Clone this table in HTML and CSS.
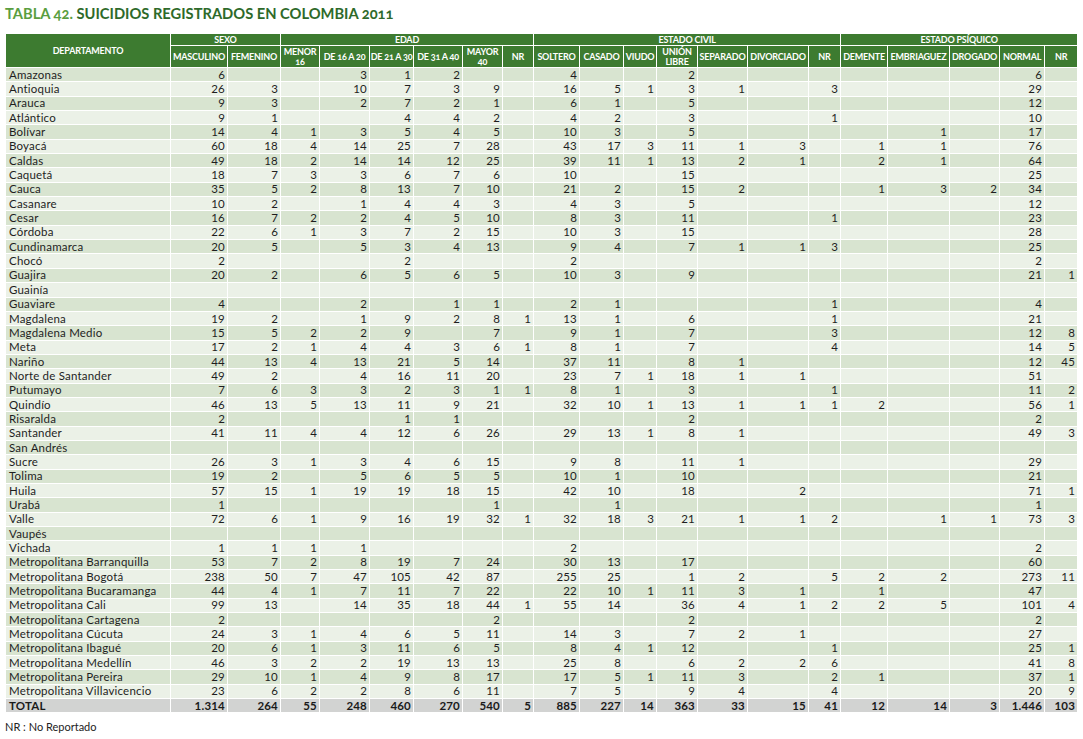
FILE: index.html
```html
<!DOCTYPE html>
<html lang="es">
<head>
<meta charset="utf-8">
<title>Tabla 42. Suicidios registrados en Colombia 2011</title>
<link rel="stylesheet" href="styles.css">
</head>
<body>
<div class="page">
<h1 class="title"><span class="num">TABLA 42.</span> SUICIDIOS REGISTRADOS EN COLOMBIA 2011</h1>
<table class="grid">
<colgroup>
<col class="c-dep"><col class="c57"><col class="c53"><col class="c39"><col class="c50"><col class="c44"><col class="c49"><col class="c40"><col class="c31">
<col class="c46"><col class="c44"><col class="c33"><col class="c41"><col class="c50"><col class="c61"><col class="c32">
<col class="c47"><col class="c62"><col class="c50"><col class="c45"><col class="c33">
</colgroup>
<thead>
<tr class="groups">
<th rowspan="2" class="h-dep">DEPARTAMENTO</th>
<th colspan="2">SEXO</th>
<th colspan="6">EDAD</th>
<th colspan="7">ESTADO CIVIL</th>
<th colspan="5">ESTADO PSÍQUICO</th>
</tr>
<tr class="cols">
<th>MASCULINO</th><th>FEMENINO</th>
<th>MENOR<br>16</th><th>DE 16 A 20</th><th>DE 21 A 30</th><th>DE 31 A 40</th><th>MAYOR<br>40</th><th>NR</th>
<th>SOLTERO</th><th>CASADO</th><th>VIUDO</th><th>UNIÓN<br>LIBRE</th><th>SEPARADO</th><th>DIVORCIADO</th><th>NR</th>
<th>DEMENTE</th><th>EMBRIAGUEZ</th><th>DROGADO</th><th>NORMAL</th><th>NR</th>
</tr>
</thead>
<tbody>
<tr><td class="dep">Amazonas</td><td>6</td><td></td><td></td><td>3</td><td>1</td><td>2</td><td></td><td></td><td>4</td><td></td><td></td><td>2</td><td></td><td></td><td></td><td></td><td></td><td></td><td>6</td><td></td></tr>
<tr><td class="dep">Antioquia</td><td>26</td><td>3</td><td></td><td>10</td><td>7</td><td>3</td><td>9</td><td></td><td>16</td><td>5</td><td>1</td><td>3</td><td>1</td><td></td><td>3</td><td></td><td></td><td></td><td>29</td><td></td></tr>
<tr><td class="dep">Arauca</td><td>9</td><td>3</td><td></td><td>2</td><td>7</td><td>2</td><td>1</td><td></td><td>6</td><td>1</td><td></td><td>5</td><td></td><td></td><td></td><td></td><td></td><td></td><td>12</td><td></td></tr>
<tr><td class="dep">Atlántico</td><td>9</td><td>1</td><td></td><td></td><td>4</td><td>4</td><td>2</td><td></td><td>4</td><td>2</td><td></td><td>3</td><td></td><td></td><td>1</td><td></td><td></td><td></td><td>10</td><td></td></tr>
<tr><td class="dep">Bolívar</td><td>14</td><td>4</td><td>1</td><td>3</td><td>5</td><td>4</td><td>5</td><td></td><td>10</td><td>3</td><td></td><td>5</td><td></td><td></td><td></td><td></td><td>1</td><td></td><td>17</td><td></td></tr>
<tr><td class="dep">Boyacá</td><td>60</td><td>18</td><td>4</td><td>14</td><td>25</td><td>7</td><td>28</td><td></td><td>43</td><td>17</td><td>3</td><td>11</td><td>1</td><td>3</td><td></td><td>1</td><td>1</td><td></td><td>76</td><td></td></tr>
<tr><td class="dep">Caldas</td><td>49</td><td>18</td><td>2</td><td>14</td><td>14</td><td>12</td><td>25</td><td></td><td>39</td><td>11</td><td>1</td><td>13</td><td>2</td><td>1</td><td></td><td>2</td><td>1</td><td></td><td>64</td><td></td></tr>
<tr><td class="dep">Caquetá</td><td>18</td><td>7</td><td>3</td><td>3</td><td>6</td><td>7</td><td>6</td><td></td><td>10</td><td></td><td></td><td>15</td><td></td><td></td><td></td><td></td><td></td><td></td><td>25</td><td></td></tr>
<tr><td class="dep">Cauca</td><td>35</td><td>5</td><td>2</td><td>8</td><td>13</td><td>7</td><td>10</td><td></td><td>21</td><td>2</td><td></td><td>15</td><td>2</td><td></td><td></td><td>1</td><td>3</td><td>2</td><td>34</td><td></td></tr>
<tr><td class="dep">Casanare</td><td>10</td><td>2</td><td></td><td>1</td><td>4</td><td>4</td><td>3</td><td></td><td>4</td><td>3</td><td></td><td>5</td><td></td><td></td><td></td><td></td><td></td><td></td><td>12</td><td></td></tr>
<tr><td class="dep">Cesar</td><td>16</td><td>7</td><td>2</td><td>2</td><td>4</td><td>5</td><td>10</td><td></td><td>8</td><td>3</td><td></td><td>11</td><td></td><td></td><td>1</td><td></td><td></td><td></td><td>23</td><td></td></tr>
<tr><td class="dep">Córdoba</td><td>22</td><td>6</td><td>1</td><td>3</td><td>7</td><td>2</td><td>15</td><td></td><td>10</td><td>3</td><td></td><td>15</td><td></td><td></td><td></td><td></td><td></td><td></td><td>28</td><td></td></tr>
<tr><td class="dep">Cundinamarca</td><td>20</td><td>5</td><td></td><td>5</td><td>3</td><td>4</td><td>13</td><td></td><td>9</td><td>4</td><td></td><td>7</td><td>1</td><td>1</td><td>3</td><td></td><td></td><td></td><td>25</td><td></td></tr>
<tr><td class="dep">Chocó</td><td>2</td><td></td><td></td><td></td><td>2</td><td></td><td></td><td></td><td>2</td><td></td><td></td><td></td><td></td><td></td><td></td><td></td><td></td><td></td><td>2</td><td></td></tr>
<tr><td class="dep">Guajira</td><td>20</td><td>2</td><td></td><td>6</td><td>5</td><td>6</td><td>5</td><td></td><td>10</td><td>3</td><td></td><td>9</td><td></td><td></td><td></td><td></td><td></td><td></td><td>21</td><td>1</td></tr>
<tr><td class="dep">Guainía</td><td></td><td></td><td></td><td></td><td></td><td></td><td></td><td></td><td></td><td></td><td></td><td></td><td></td><td></td><td></td><td></td><td></td><td></td><td></td><td></td></tr>
<tr><td class="dep">Guaviare</td><td>4</td><td></td><td></td><td>2</td><td></td><td>1</td><td>1</td><td></td><td>2</td><td>1</td><td></td><td></td><td></td><td></td><td>1</td><td></td><td></td><td></td><td>4</td><td></td></tr>
<tr><td class="dep">Magdalena</td><td>19</td><td>2</td><td></td><td>1</td><td>9</td><td>2</td><td>8</td><td>1</td><td>13</td><td>1</td><td></td><td>6</td><td></td><td></td><td>1</td><td></td><td></td><td></td><td>21</td><td></td></tr>
<tr><td class="dep">Magdalena Medio</td><td>15</td><td>5</td><td>2</td><td>2</td><td>9</td><td></td><td>7</td><td></td><td>9</td><td>1</td><td></td><td>7</td><td></td><td></td><td>3</td><td></td><td></td><td></td><td>12</td><td>8</td></tr>
<tr><td class="dep">Meta</td><td>17</td><td>2</td><td>1</td><td>4</td><td>4</td><td>3</td><td>6</td><td>1</td><td>8</td><td>1</td><td></td><td>7</td><td></td><td></td><td>4</td><td></td><td></td><td></td><td>14</td><td>5</td></tr>
<tr><td class="dep">Nariño</td><td>44</td><td>13</td><td>4</td><td>13</td><td>21</td><td>5</td><td>14</td><td></td><td>37</td><td>11</td><td></td><td>8</td><td>1</td><td></td><td></td><td></td><td></td><td></td><td>12</td><td>45</td></tr>
<tr><td class="dep">Norte de Santander</td><td>49</td><td>2</td><td></td><td>4</td><td>16</td><td>11</td><td>20</td><td></td><td>23</td><td>7</td><td>1</td><td>18</td><td>1</td><td>1</td><td></td><td></td><td></td><td></td><td>51</td><td></td></tr>
<tr><td class="dep">Putumayo</td><td>7</td><td>6</td><td>3</td><td>3</td><td>2</td><td>3</td><td>1</td><td>1</td><td>8</td><td>1</td><td></td><td>3</td><td></td><td></td><td>1</td><td></td><td></td><td></td><td>11</td><td>2</td></tr>
<tr><td class="dep">Quindío</td><td>46</td><td>13</td><td>5</td><td>13</td><td>11</td><td>9</td><td>21</td><td></td><td>32</td><td>10</td><td>1</td><td>13</td><td>1</td><td>1</td><td>1</td><td>2</td><td></td><td></td><td>56</td><td>1</td></tr>
<tr><td class="dep">Risaralda</td><td>2</td><td></td><td></td><td></td><td>1</td><td>1</td><td></td><td></td><td></td><td></td><td></td><td>2</td><td></td><td></td><td></td><td></td><td></td><td></td><td>2</td><td></td></tr>
<tr><td class="dep">Santander</td><td>41</td><td>11</td><td>4</td><td>4</td><td>12</td><td>6</td><td>26</td><td></td><td>29</td><td>13</td><td>1</td><td>8</td><td>1</td><td></td><td></td><td></td><td></td><td></td><td>49</td><td>3</td></tr>
<tr><td class="dep">San Andrés</td><td></td><td></td><td></td><td></td><td></td><td></td><td></td><td></td><td></td><td></td><td></td><td></td><td></td><td></td><td></td><td></td><td></td><td></td><td></td><td></td></tr>
<tr><td class="dep">Sucre</td><td>26</td><td>3</td><td>1</td><td>3</td><td>4</td><td>6</td><td>15</td><td></td><td>9</td><td>8</td><td></td><td>11</td><td>1</td><td></td><td></td><td></td><td></td><td></td><td>29</td><td></td></tr>
<tr><td class="dep">Tolima</td><td>19</td><td>2</td><td></td><td>5</td><td>6</td><td>5</td><td>5</td><td></td><td>10</td><td>1</td><td></td><td>10</td><td></td><td></td><td></td><td></td><td></td><td></td><td>21</td><td></td></tr>
<tr><td class="dep">Huila</td><td>57</td><td>15</td><td>1</td><td>19</td><td>19</td><td>18</td><td>15</td><td></td><td>42</td><td>10</td><td></td><td>18</td><td></td><td>2</td><td></td><td></td><td></td><td></td><td>71</td><td>1</td></tr>
<tr><td class="dep">Urabá</td><td>1</td><td></td><td></td><td></td><td></td><td></td><td>1</td><td></td><td></td><td>1</td><td></td><td></td><td></td><td></td><td></td><td></td><td></td><td></td><td>1</td><td></td></tr>
<tr><td class="dep">Valle</td><td>72</td><td>6</td><td>1</td><td>9</td><td>16</td><td>19</td><td>32</td><td>1</td><td>32</td><td>18</td><td>3</td><td>21</td><td>1</td><td>1</td><td>2</td><td></td><td>1</td><td>1</td><td>73</td><td>3</td></tr>
<tr><td class="dep">Vaupés</td><td></td><td></td><td></td><td></td><td></td><td></td><td></td><td></td><td></td><td></td><td></td><td></td><td></td><td></td><td></td><td></td><td></td><td></td><td></td><td></td></tr>
<tr><td class="dep">Vichada</td><td>1</td><td>1</td><td>1</td><td>1</td><td></td><td></td><td></td><td></td><td>2</td><td></td><td></td><td></td><td></td><td></td><td></td><td></td><td></td><td></td><td>2</td><td></td></tr>
<tr><td class="dep">Metropolitana Barranquilla</td><td>53</td><td>7</td><td>2</td><td>8</td><td>19</td><td>7</td><td>24</td><td></td><td>30</td><td>13</td><td></td><td>17</td><td></td><td></td><td></td><td></td><td></td><td></td><td>60</td><td></td></tr>
<tr><td class="dep">Metropolitana Bogotá</td><td>238</td><td>50</td><td>7</td><td>47</td><td>105</td><td>42</td><td>87</td><td></td><td>255</td><td>25</td><td></td><td>1</td><td>2</td><td></td><td>5</td><td>2</td><td>2</td><td></td><td>273</td><td>11</td></tr>
<tr><td class="dep">Metropolitana Bucaramanga</td><td>44</td><td>4</td><td>1</td><td>7</td><td>11</td><td>7</td><td>22</td><td></td><td>22</td><td>10</td><td>1</td><td>11</td><td>3</td><td>1</td><td></td><td>1</td><td></td><td></td><td>47</td><td></td></tr>
<tr><td class="dep">Metropolitana Cali</td><td>99</td><td>13</td><td></td><td>14</td><td>35</td><td>18</td><td>44</td><td>1</td><td>55</td><td>14</td><td></td><td>36</td><td>4</td><td>1</td><td>2</td><td>2</td><td>5</td><td></td><td>101</td><td>4</td></tr>
<tr><td class="dep">Metropolitana Cartagena</td><td>2</td><td></td><td></td><td></td><td></td><td></td><td>2</td><td></td><td></td><td></td><td></td><td>2</td><td></td><td></td><td></td><td></td><td></td><td></td><td>2</td><td></td></tr>
<tr><td class="dep">Metropolitana Cúcuta</td><td>24</td><td>3</td><td>1</td><td>4</td><td>6</td><td>5</td><td>11</td><td></td><td>14</td><td>3</td><td></td><td>7</td><td>2</td><td>1</td><td></td><td></td><td></td><td></td><td>27</td><td></td></tr>
<tr><td class="dep">Metropolitana Ibagué</td><td>20</td><td>6</td><td>1</td><td>3</td><td>11</td><td>6</td><td>5</td><td></td><td>8</td><td>4</td><td>1</td><td>12</td><td></td><td></td><td>1</td><td></td><td></td><td></td><td>25</td><td>1</td></tr>
<tr><td class="dep">Metropolitana Medellín</td><td>46</td><td>3</td><td>2</td><td>2</td><td>19</td><td>13</td><td>13</td><td></td><td>25</td><td>8</td><td></td><td>6</td><td>2</td><td>2</td><td>6</td><td></td><td></td><td></td><td>41</td><td>8</td></tr>
<tr><td class="dep">Metropolitana Pereira</td><td>29</td><td>10</td><td>1</td><td>4</td><td>9</td><td>8</td><td>17</td><td></td><td>17</td><td>5</td><td>1</td><td>11</td><td>3</td><td></td><td>2</td><td>1</td><td></td><td></td><td>37</td><td>1</td></tr>
<tr><td class="dep">Metropolitana Villavicencio</td><td>23</td><td>6</td><td>2</td><td>2</td><td>8</td><td>6</td><td>11</td><td></td><td>7</td><td>5</td><td></td><td>9</td><td>4</td><td></td><td>4</td><td></td><td></td><td></td><td>20</td><td>9</td></tr>
<tr class="total"><td class="dep">TOTAL</td><td>1.314</td><td>264</td><td>55</td><td>248</td><td>460</td><td>270</td><td>540</td><td>5</td><td>885</td><td>227</td><td>14</td><td>363</td><td>33</td><td>15</td><td>41</td><td>12</td><td>14</td><td>3</td><td>1.446</td><td>103</td></tr>
</tbody>
</table>
<p class="note">NR : No Reportado</p>
</div>
</body>
</html>
```

FILE: styles.css
```css
* { box-sizing: border-box; }
html, body { margin: 0; padding: 0; background: #ffffff; }
body {
  font-family: Lato, "Liberation Sans", "DejaVu Sans", sans-serif;
  color: #1e1e1e;
}
.page { padding: 0 6px 0 5px; }
.title {
  margin: 0;
  padding-top: 5px;
  height: 33px;
  font-size: 14.7px;
  line-height: 17px;
  font-weight: 700;
  color: #2e6a2a;
  font-variant-numeric: oldstyle-nums;
}
.title .num { color: #5a9e40; }

.grid {
  border-collapse: collapse;
  table-layout: fixed;
  width: 1072px;
}
.c-dep { width: 165px; }
.c57 { width: 57px; } .c53 { width: 53px; } .c39 { width: 39px; } .c50 { width: 50px; }
.c44 { width: 44px; } .c49 { width: 49px; } .c40 { width: 40px; } .c31 { width: 31px; }
.c46 { width: 46px; } .c33 { width: 33px; } .c41 { width: 41px; } .c61 { width: 61px; }
.c32 { width: 32px; } .c47 { width: 47px; } .c62 { width: 62px; } .c45 { width: 45px; }

.grid th {
  background: #3d7b30;
  color: #ffffff;
  font-weight: 700;
  font-size: 9px;
  line-height: 10px;
  letter-spacing: -0.2px;
  border: 1px solid #ffffff;
  padding: 0;
  text-align: center;
  vertical-align: middle;
  font-variant-numeric: oldstyle-nums;
  white-space: nowrap;
}
.grid tr.groups th { height: 12px; }
.grid tr.cols th { height: 22px; }

.grid td {
  border: 1px solid #ffffff;
  height: 14.35px;
  padding: 0 2px 0 0;
  text-align: right;
  vertical-align: middle;
  font-size: 11.5px;
  line-height: 12px;
  letter-spacing: 0.2px;
  white-space: nowrap;
}
.grid td.dep { text-align: left; padding-left: 3px; }
.grid tbody tr:nth-child(odd) td { background: #d8e4d0; }
.grid tbody tr:nth-child(even) td { background: #ebf1e7; }
.grid tbody tr.total td { background: #d2d3d2; font-weight: 700; color: #1a1a1a; }

.note {
  margin: 7px 0 0 0;
  font-size: 11px;
  line-height: 13px;
  color: #222;
}
```
